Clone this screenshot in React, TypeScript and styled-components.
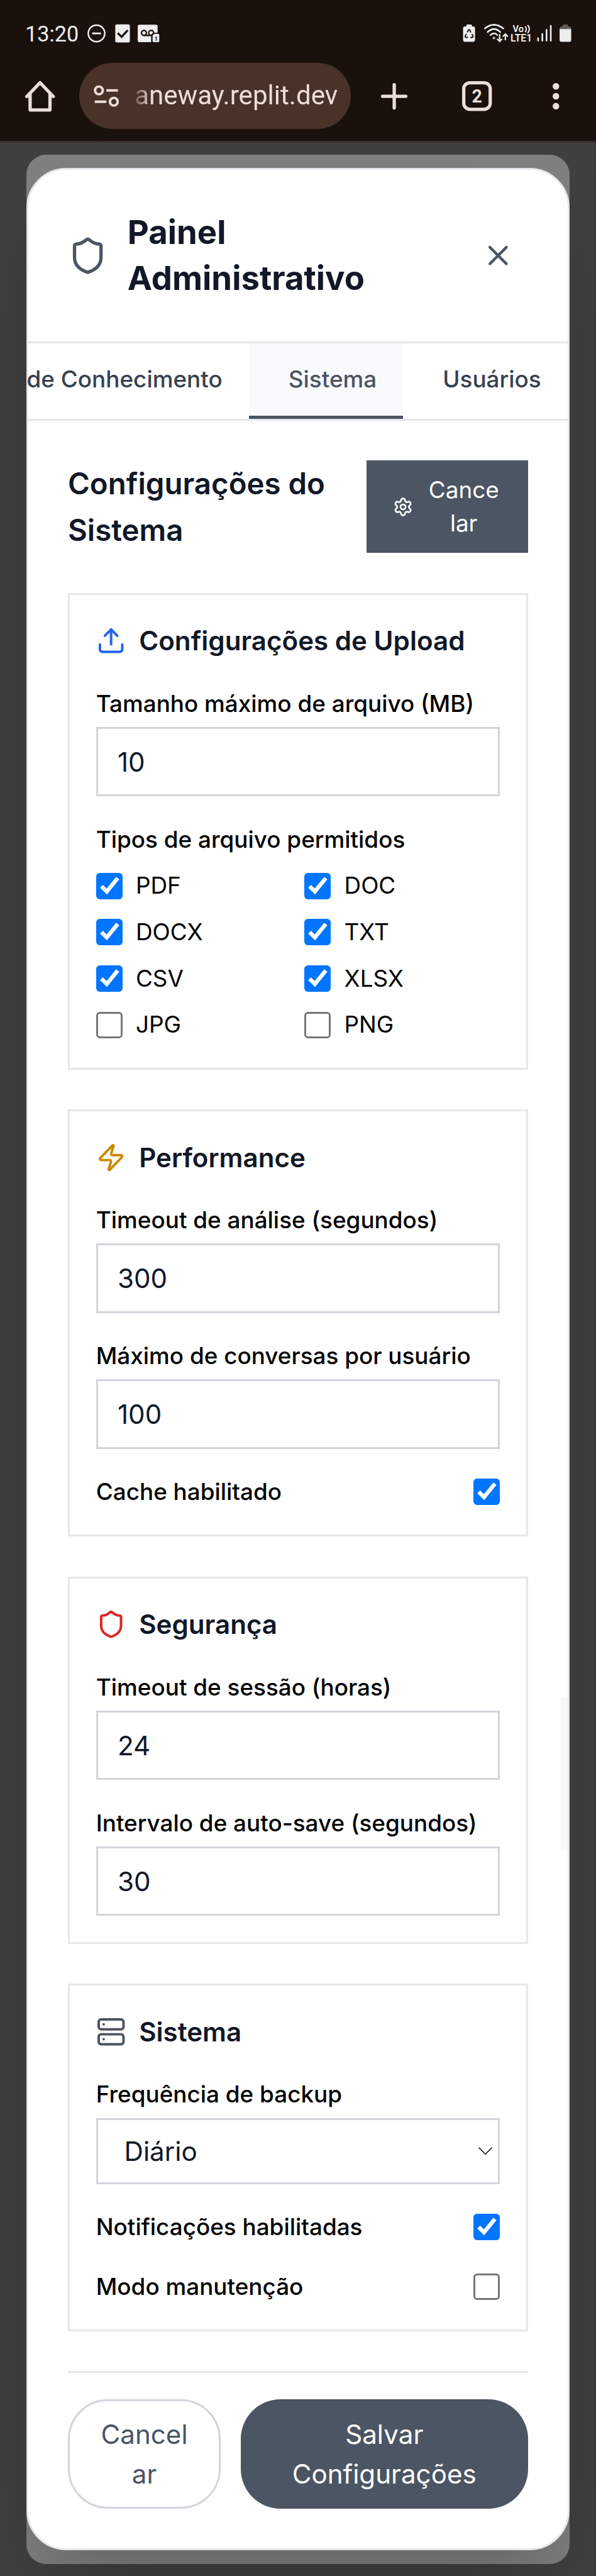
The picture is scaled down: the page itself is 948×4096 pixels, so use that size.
import React from 'react';
import styled, { createGlobalStyle, css } from 'styled-components';
import { Shield, X, Settings, Upload, Zap, Server } from 'lucide-react';

const SCALE = 948 / 360;

/* One design unit is a CSS pixel of the 360-unit wide phone viewport. */
const px = (n: number) => n * SCALE;
const u = (n: number) => `${+px(n).toFixed(3)}px`;

/* Hairlines are whole pixels; the padding beside them gives back the rounding. */
const HAIRLINE = '3px';
const inset = (n: number) => `${+(px(n + 1) - 3).toFixed(3)}px`;

const colors = {
  chrome: '#1a110d',
  pill: '#493228',
  chromeText: '#ecdfda',
  slate: '#4b5563',
  ink: '#111827',
  line: '#e5e7eb',
  field: '#d1d5db',
};

const Global = createGlobalStyle`
  *, *::before, *::after { box-sizing: border-box; }
  body { margin: 0; background: #404040; font-family: Inter, "Liberation Sans", sans-serif; }
  h1, h2, h3 { margin: 0; }
  button, input { font-family: inherit; margin: 0; }
  svg { display: block; flex: none; overflow: visible; }
`;

const Phone = styled.div`
  width: 948px;
  height: 4096px;
  display: flex;
  flex-direction: column;
  overflow: hidden;
  background: #404040;
`;

const BrowserChrome = styled.header`
  flex: none;
  height: ${u(86.33)};
  background: ${colors.chrome};
  border-bottom: ${HAIRLINE} solid #3e2e29;
  font-family: Roboto, sans-serif;
`;

const StatusBar = styled.div`
  height: ${u(37.33)};
  padding: ${u(3.4)} ${u(15)} 0 ${u(15.2)};
  display: flex;
  align-items: center;
  justify-content: space-between;
  color: #eeeeee;
`;

const StatusGroup = styled.div`
  display: flex;
  align-items: center;
`;

const Clock = styled.span`
  font-size: ${u(13)};
  line-height: ${u(16)};
  width: ${u(37.4)};
  white-space: nowrap;
`;

const Toolbar = styled.div`
  height: ${u(41.33)};
  display: flex;
  align-items: center;
  color: ${colors.chromeText};
`;

const HomeSlot = styled.div`
  width: ${u(48)};
  display: flex;
  justify-content: center;
`;

const UrlPill = styled.div`
  width: ${u(164)};
  height: ${u(40)};
  border-radius: ${u(20)};
  background: ${colors.pill};
  display: flex;
  align-items: center;
  padding-left: ${u(8.4)};
`;

const UrlText = styled.div`
  margin-left: ${u(7.4)};
  width: ${u(125.2)};
  display: flex;
  justify-content: flex-end;
  white-space: nowrap;
  font-size: ${u(16)};
  line-height: ${u(26)};
  mask-image: linear-gradient(to right, transparent 0, #000 ${u(13)});
`;

const ActionSlot = styled.div<{ $w: number }>`
  width: ${(p) => u(p.$w)};
  display: flex;
  justify-content: center;
`;

const Page = styled.main`
  flex: 1;
  padding: ${u(7)} ${u(15)} ${u(8)} ${u(16)};
  border-right: ${HAIRLINE} solid #3b3b3b;
`;

const BackCard = styled.div`
  height: ${u(1454.8)};
  border-radius: ${u(12)};
  background: #808080;
  padding-top: ${u(8)};
`;

const Modal = styled.section`
  position: relative;
  height: ${u(1438.4)};
  background: #fff;
  border: ${HAIRLINE} solid ${colors.line};
  border-radius: ${u(24)};
  box-shadow: 0 ${u(25)} ${u(50)} ${u(-12)} rgba(0, 0, 0, 0.25);
`;

const ModalHeader = styled.div`
  height: ${u(104.85)};
  padding: 0 ${inset(24)};
  display: flex;
  align-items: center;
  border-bottom: ${HAIRLINE} solid ${colors.line};
  color: ${colors.slate};
`;

const ModalTitle = styled.h1`
  flex: 1;
  margin-left: ${u(12)};
  font-size: ${u(20)};
  line-height: ${u(28)};
  font-weight: 700;
  color: ${colors.ink};
`;

const CloseButton = styled.button`
  padding: ${u(8)};
  border: 0;
  background: none;
  color: ${colors.slate};
`;

const Tabs = styled.nav`
  height: ${u(46.9)};
  display: flex;
  justify-content: flex-end;
  border-bottom: ${HAIRLINE} solid ${colors.line};
`;

const Tab = styled.div<{ $active?: boolean }>`
  flex: none;
  padding: ${u(11.8)} ${u(15.9)} 0 ${u(24)};
  font-size: ${u(14)};
  line-height: ${u(20)};
  font-weight: 500;
  color: #374151;
  white-space: nowrap;
  &:first-child {
    padding-left: 0;
  }
  ${(p) =>
    p.$active &&
    css`
      background: #f8fafc;
      color: ${colors.slate};
      border-bottom: ${u(2)} solid ${colors.slate};
    `}
`;

const Content = styled.div`
  padding: ${u(23.75)} ${inset(24)} ${u(24)};
  display: flex;
  flex-direction: column;
  gap: ${u(24)};
`;

const SectionHead = styled.div`
  height: ${u(56)};
  display: flex;
  justify-content: space-between;
`;

const SectionTitle = styled.h2`
  font-size: ${u(18)};
  line-height: ${u(28)};
  font-weight: 600;
  color: ${colors.ink};
`;

const CancelTop = styled.button`
  width: ${u(97.6)};
  padding: 0 ${u(16)};
  display: flex;
  align-items: center;
  gap: ${u(8)};
  border: 0;
  background: ${colors.slate};
  color: #fff;
  font-size: ${u(14)};
  line-height: ${u(20)};
`;

const CancelTopLabel = styled.span`
  flex: 1;
  text-align: center;
`;

const Card = styled.section`
  padding: ${inset(16)};
  border: ${HAIRLINE} solid ${colors.line};
  display: flex;
  flex-direction: column;
  gap: ${u(16)};
`;

const CardTitle = styled.h3`
  height: ${u(24)};
  display: flex;
  align-items: center;
  gap: ${u(8)};
  font-size: ${u(16)};
  line-height: ${u(24)};
  font-weight: 600;
  color: ${colors.ink};
`;

const Field = styled.div`
  display: flex;
  flex-direction: column;
  gap: ${u(4)};
`;

const Label = styled.label`
  font-size: ${u(14)};
  line-height: ${u(20)};
  font-weight: 500;
  color: #000;
  white-space: nowrap;
`;

const TextInput = styled.input`
  height: ${u(42)};
  width: 100%;
  padding: 0 ${inset(12)};
  border: ${HAIRLINE} solid ${colors.field};
  border-radius: 0;
  background: #fff;
  font-size: ${u(16)};
  line-height: ${u(24)};
  color: ${colors.ink};
  outline: none;
`;

const SelectBox = styled.div`
  height: ${u(40)};
  padding: 0 ${inset(3.6)} 0 ${inset(16)};
  display: flex;
  align-items: center;
  justify-content: space-between;
  border: ${HAIRLINE} solid ${colors.field};
  font-size: ${u(16)};
  line-height: ${u(24)};
  color: ${colors.ink};
`;

const TypeField = styled(Field)`
  gap: ${u(8)};
`;

const TypeGrid = styled.div`
  display: grid;
  grid-template-columns: 1fr 1fr;
  gap: ${u(8)};
`;

const TypeOption = styled.div`
  height: ${u(20)};
  display: flex;
  align-items: center;
  gap: ${u(8)};
  font-size: ${u(14)};
  line-height: ${u(20)};
  color: #000;
`;

const ToggleRow = styled.div`
  height: ${u(20)};
  display: flex;
  align-items: center;
  justify-content: space-between;
`;

const Box = styled.span<{ $on: boolean }>`
  flex: none;
  width: ${u(16)};
  height: ${u(16)};
  border-radius: ${u(2.2)};
  border: ${(p) => (p.$on ? '0' : `${HAIRLINE} solid #767676`)};
  background: ${(p) => (p.$on ? '#0075ff' : '#fff')};
`;

const Actions = styled.div`
  padding-top: ${inset(16)};
  border-top: ${HAIRLINE} solid ${colors.line};
  display: flex;
  gap: ${u(12)};
`;

const PillButton = styled.button<{ $primary?: boolean }>`
  width: ${(p) => (p.$primary ? u(173.6) : u(92.4))};
  height: ${u(66)};
  border-radius: ${u(24)};
  border: ${(p) => (p.$primary ? '0' : `${HAIRLINE} solid ${colors.field}`)};
  background: ${(p) => (p.$primary ? colors.slate : '#fff')};
  color: ${(p) => (p.$primary ? '#fff' : colors.slate)};
  padding: 0;
  font-size: ${u(16)};
  line-height: ${u(24)};
`;

const ScrollThumb = styled.div`
  position: absolute;
  right: 0;
  top: ${u(922)};
  width: ${u(4)};
  height: ${u(93)};
  background: #f8f8f8;
`;

function Check({ on = false }: { on?: boolean }) {
  return (
    <Box $on={on}>
      {on && (
        <svg width={px(16)} height={px(16)} viewBox="0 0 16 16" fill="none" stroke="#fff" strokeWidth="2.4">
          <path d="M3.200 8.050 6.400 11.200 13 3.100" />
        </svg>
      )}
    </Box>
  );
}

function StatusLeftIcons() {
  return (
    <svg width={px(88)} height={px(12)} viewBox="0 0 264 36" fill="none">
      <circle cx="16.5" cy="17.2" r="15" stroke="#eee" strokeWidth="2.8" />
      <path d="M8.500 17.200h16" stroke="#eee" strokeWidth="3.2" />
      <rect x="50.5" y="0.8" width="26.5" height="32.7" rx="3" fill="#eee" />
      <path d="m55 16.500 7 7 11-12" stroke={colors.chrome} strokeWidth="3.8" />
      <path d="M94 1.500h30.500q2.700 0 2.700 3V33H94q-2.800 0-2.800-2.800V4.500q0-3 2.800-3Z" fill="#eee" />
      <circle cx="102.5" cy="16.3" r="4.500" stroke={colors.chrome} strokeWidth="2.600" />
      <circle cx="115.5" cy="16.3" r="4.500" stroke={colors.chrome} strokeWidth="2.600" />
      <path d="M102.500 20.900h13" stroke={colors.chrome} strokeWidth="2.600" />
      <path d="M115.500 19.500l4-3.500H132v18h-16.500z" fill={colors.chrome} />
      <path d="M121.500 18h6.700q2 0 2 2v11q0 2-2 2h-8q-2 0-2-2v-9.700Z" fill="#eee" />
      <text x="121.300" y="30.300" fontSize="11" fontWeight="700" fill={colors.chrome}>1</text>
    </svg>
  );
}

function StatusRightIcons() {
  return (
    <svg width={px(66.67)} height={px(12)} viewBox="0 0 200 36" fill="none" stroke="#eee">
      <path d="M11.500 1h7q1.500 0 1.500 1.500v2h2q3.700 0 3.700 3.500v20.500q0 4-4 4H8q-4 0-4-4V8q0-3.500 3.500-3.500H10v-2Q10 1 11.500 1Z" fill="#eee" stroke="none" />
      <path d="m11.500 15.500 2-4q1.400-2 2.800 0l2 4M10 18l-2 4q-.700 2.300 1.500 2.500h3.300M17 24.500h3.500q2-.300 1.500-2.500l-2-4" stroke={colors.chrome} strokeWidth="2.100" />
      <g strokeWidth="2.900" strokeLinecap="round">
        <path d="M43.500 8.300Q60-5.300 77 8.300M48.500 14.800Q60 3.500 71.500 14.800M54 20.200Q60 14 66 20.200" />
        <circle cx="60" cy="25.500" r=".7" />
      </g>
      <path d="M70.300 18.500v13m-4.600-4.500 4.600 4.700 4.600-4.700M80.700 29.500v-11m-4.600 4.500 4.600-4.700 4.600 4.700" strokeWidth="2.600" />
      <text x="94" y="14.500" fontSize="16.500" fontWeight="600" fill="#eee" stroke="none" textLength="20" lengthAdjust="spacingAndGlyphs">Vo</text>
      <path d="M116.500 4.500q4.500 5 0 10.500M121 2q6.500 7.500 0 14.800" strokeWidth="2.300" />
      <text x="90" y="32.300" fontSize="17.800" fontWeight="600" fill="#eee" stroke="none" textLength="39" lengthAdjust="spacingAndGlyphs">LTE1</text>
      <path d="M140 30.500v-4.500M147.700 30.500V18.300M155.300 30.500V10.500M163 30.500V3.500" strokeWidth="3" strokeLinecap="round" />
      <path d="M186 1h7q1.300 0 1.300 1.500v2h2q3.700 0 3.700 4V11h-21V8.500q0-4 3.700-4h2v-2Q184.700 1 186 1Z" fill="#655d5a" stroke="none" />
      <path d="M179 9.500h21v19.500q0 3.500-3.500 3.500h-14q-3.500 0-3.500-3.500Z" fill="#eee" stroke="none" />
    </svg>
  );
}

function HomeIcon() {
  return (
    <svg width={px(18)} height={px(19)} viewBox="0 0 54 57" fill="none" stroke={colors.chromeText} strokeWidth="6" strokeLinejoin="round" strokeLinecap="round">
      <path d="M3 29 27 4l24 25M9 24v28q0 1.500 1.500 1.500h33q1.500 0 1.500-1.500V24" />
    </svg>
  );
}

function TuneIcon() {
  return (
    <svg width={px(15)} height={px(13.33)} viewBox="0 0 45 40" fill="none" stroke={colors.chromeText} strokeWidth="4.400">
      <circle cx="9.500" cy="10" r="7" />
      <path d="M23 10h21M2 30.500h21" />
      <circle cx="36.500" cy="30.500" r="7" />
    </svg>
  );
}

function PlusIcon() {
  return (
    <svg width={px(16)} height={px(16)} viewBox="0 0 48 48" stroke={colors.chromeText} strokeWidth="6" strokeLinecap="round">
      <path d="M24 3v42M3 24h42" />
    </svg>
  );
}

function TabsIcon() {
  return (
    <svg width={px(18)} height={px(18)} viewBox="0 0 54 54" fill="none">
      <rect x="3" y="3" width="48" height="48" rx="11" stroke={colors.chromeText} strokeWidth="6" />
      <text x="27" y="39" textAnchor="middle" fontSize="33" fontWeight="700" fill={colors.chromeText}>2</text>
    </svg>
  );
}

function DotsIcon() {
  return (
    <svg width={px(4)} height={px(16)} viewBox="0 0 12 48" fill={colors.chromeText}>
      <circle cx="6" cy="6" r="6" />
      <circle cx="6" cy="24" r="6" />
      <circle cx="6" cy="42" r="6" />
    </svg>
  );
}

const fileTypes: [string, boolean][] = [
  ['PDF', true],
  ['DOC', true],
  ['DOCX', true],
  ['TXT', true],
  ['CSV', true],
  ['XLSX', true],
  ['JPG', false],
  ['PNG', false],
];

function NumberField({ label, value }: { label: string; value: string }) {
  return (
    <Field>
      <Label>{label}</Label>
      <TextInput defaultValue={value} />
    </Field>
  );
}

function Toggle({ label, on }: { label: string; on?: boolean }) {
  return (
    <ToggleRow>
      <Label>{label}</Label>
      <Check on={on} />
    </ToggleRow>
  );
}

export default function App() {
  return (
    <Phone>
      <Global />
      <BrowserChrome>
        <StatusBar>
          <StatusGroup>
            <Clock>13:20</Clock>
            <StatusLeftIcons />
          </StatusGroup>
          <StatusRightIcons />
        </StatusBar>
        <Toolbar>
          <HomeSlot><HomeIcon /></HomeSlot>
          <UrlPill>
            <TuneIcon />
            <UrlText>aneway.replit.dev</UrlText>
          </UrlPill>
          <ActionSlot $w={52}><PlusIcon /></ActionSlot>
          <ActionSlot $w={48}><TabsIcon /></ActionSlot>
          <ActionSlot $w={48}><DotsIcon /></ActionSlot>
        </Toolbar>
      </BrowserChrome>
      <Page>
        <BackCard>
          <Modal>
            <ModalHeader>
              <Shield size={px(24)} />
              <ModalTitle>Painel<br />Administrativo</ModalTitle>
              <CloseButton><X size={px(20)} /></CloseButton>
            </ModalHeader>
            <Tabs>
              <Tab>de Conhecimento</Tab>
              <Tab $active>Sistema</Tab>
              <Tab>Usuários</Tab>
            </Tabs>
            <Content>
              <SectionHead>
                <SectionTitle>Configurações do<br />Sistema</SectionTitle>
                <CancelTop>
                  <Settings size={px(12.2)} />
                  <CancelTopLabel>Cance<br />lar</CancelTopLabel>
                </CancelTop>
              </SectionHead>

              <Card>
                <CardTitle><Upload size={px(18)} color="#2563eb" />Configurações de Upload</CardTitle>
                <NumberField label="Tamanho máximo de arquivo (MB)" value="10" />
                <TypeField>
                  <Label>Tipos de arquivo permitidos</Label>
                  <TypeGrid>
                    {fileTypes.map(([name, on]) => (
                      <TypeOption key={name}><Check on={on} />{name}</TypeOption>
                    ))}
                  </TypeGrid>
                </TypeField>
              </Card>

              <Card>
                <CardTitle><Zap size={px(18)} color="#ca8a04" />Performance</CardTitle>
                <NumberField label="Timeout de análise (segundos)" value="300" />
                <NumberField label="Máximo de conversas por usuário" value="100" />
                <Toggle label="Cache habilitado" on />
              </Card>

              <Card>
                <CardTitle><Shield size={px(18)} color="#dc2626" />Segurança</CardTitle>
                <NumberField label="Timeout de sessão (horas)" value="24" />
                <NumberField label="Intervalo de auto-save (segundos)" value="30" />
              </Card>

              <Card>
                <CardTitle><Server size={px(18)} color="#4b5563" />Sistema</CardTitle>
                <Field>
                  <Label>Frequência de backup</Label>
                  <SelectBox>
                    Diário
                    <svg width={px(8.4)} height={px(4.6)} viewBox="0 0 25 14" fill="none" stroke="#111" strokeWidth="1.8">
                      <path d="m.5 1 12 12 12-12" />
                    </svg>
                  </SelectBox>
                </Field>
                <Toggle label="Notificações habilitadas" on />
                <Toggle label="Modo manutenção" />
              </Card>

              <Actions>
                <PillButton>Cancel<br />ar</PillButton>
                <PillButton $primary>Salvar<br />Configurações</PillButton>
              </Actions>
            </Content>
            <ScrollThumb />
          </Modal>
        </BackCard>
      </Page>
    </Phone>
  );
}
